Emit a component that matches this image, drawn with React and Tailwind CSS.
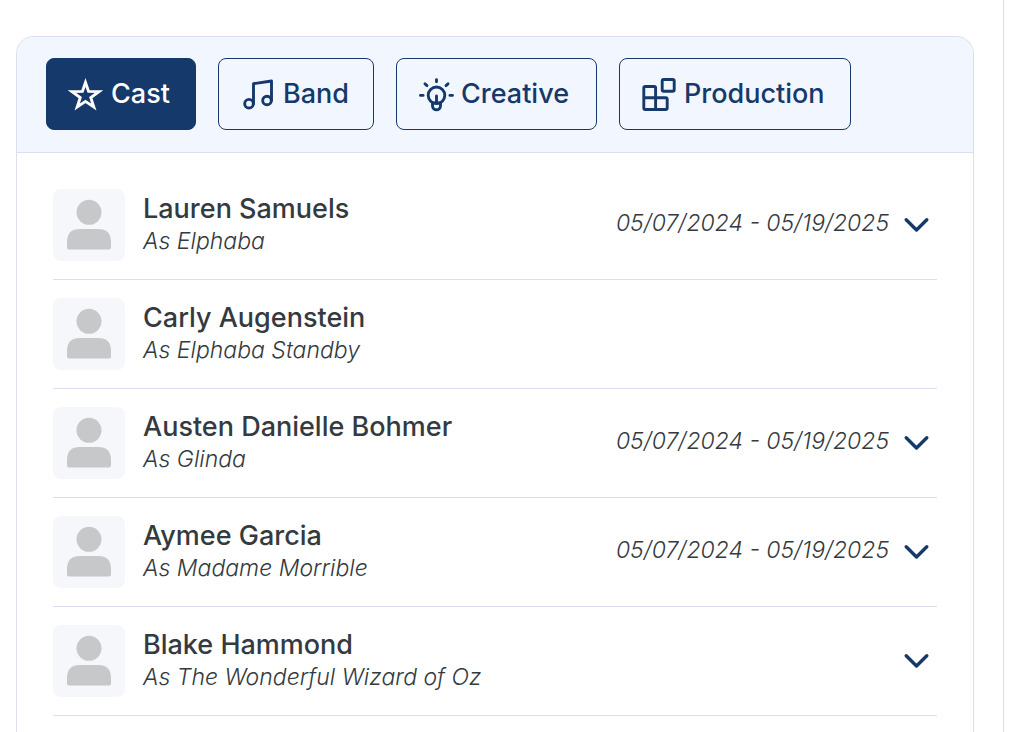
import { useState } from "react";

const people = [
    { name: "Lauren Samuels", role: "As Elphaba", dates: "05/07/2024 - 05/19/2025", expandable: true },
    { name: "Carly Augenstein", role: "As Elphaba Standby" },
    { name: "Austen Danielle Bohmer", role: "As Glinda", dates: "05/07/2024 - 05/19/2025", expandable: true },
    { name: "Aymee Garcia", role: "As Madame Morrible", dates: "05/07/2024 - 05/19/2025", expandable: true },
    { name: "Blake Hammond", role: "As The Wonderful Wizard of Oz", expandable: true },
];

function TabIcon({ children, sharp }) {
    return (
        <svg
            viewBox="0 0 36 36"
            className="size-9 shrink-0"
            fill="none"
            stroke="currentColor"
            strokeWidth="2.9"
            strokeLinecap="round"
            strokeLinejoin={sharp ? "miter" : "round"}
            strokeMiterlimit="8"
            aria-hidden="true"
        >
            {children}
        </svg>
    );
}

const tabs = [
    {
        label: "Cast",
        width: "min-w-[150px]",
        icon: (
            <TabIcon sharp>
                <path d="M17.5 6.5 20.6 15.4 31 15.6 22.8 21.6 25.8 31 17.5 25.4 9.2 31 12.2 21.6 4 15.6 14.4 15.4Z" />
            </TabIcon>
        ),
    },
    {
        label: "Band",
        width: "min-w-[156px]",
        icon: (
            <TabIcon>
                <circle cx="9" cy="27.7" r="4.3" />
                <circle cx="27" cy="24.5" r="4.3" />
                <path d="M13.5 27.7V7.7L31.5 5V24.5" />
            </TabIcon>
        ),
    },
    {
        label: "Creative",
        width: "min-w-[201px]",
        icon: (
            <TabIcon>
                <circle cx="18.5" cy="19.3" r="8.3" />
                <path d="M18.5 20V26M14.5 27V29.8a4 4 0 0 0 8 0V27Z" />
                <path d="M18.5 3.6V5.8M7 7.8 9 9.6M30 7.8 28 9.6M2.5 19.4H5.1M31.9 19.4H34.5" />
            </TabIcon>
        ),
    },
    {
        label: "Production",
        width: "min-w-[232px]",
        icon: (
            <TabIcon>
                <rect x="21.2" y="3.5" width="12" height="11.8" rx="1.5" />
                <path d="M14.6 21.7V12q0-1.5-1.5-1.5H4.3q-1.5 0-1.5 1.5V32q0 1.5 1.5 1.5H24.7q1.5 0 1.5-1.5V23.2q0-1.5-1.5-1.5H2.8M14.6 21.7V33.5" />
            </TabIcon>
        ),
    },
];

function Avatar() {
    return (
        <div className="size-18 shrink-0 rounded-lg bg-[#f5f7fb]">
            <svg viewBox="0 0 72 72" className="size-18" fill="#c7c8ca" aria-hidden="true">
                <circle cx="36" cy="23.3" r="12.5" />
                <path d="M14 58.5V53q0-13 13-13H45q13 0 13 13V58.5q0 2-2 2H16q-2 0-2-2Z" />
            </svg>
        </div>
    );
}

function PersonRow({ person }) {
    return (
        <li className="flex items-center border-b border-[#dcdfeb] py-[18px]">
            <Avatar />
            <div className="ml-[18px] flex-1">
                <p className="text-[27px] leading-8 font-medium">{person.name}</p>
                <p className="text-[23px] leading-8 font-light italic">{person.role}</p>
            </div>
            {person.dates && (
                <span className="pb-1 text-[23px] leading-8 font-light italic">{person.dates}</span>
            )}
            {person.expandable && (
                <button
                    type="button"
                    aria-label={`Show dates for ${person.name}`}
                    className="ml-2 p-1 text-[#16396b]"
                >
                    <svg viewBox="0 0 32 32" className="size-8" fill="none" stroke="currentColor" strokeWidth="3.4" strokeLinecap="round" strokeLinejoin="round">
                        <path d="M5.2 10.7 15.5 21 25.8 10.7" />
                    </svg>
                </button>
            )}
        </li>
    );
}

export default function App() {
    const [active, setActive] = useState("Cast");

    return (
        <div className="h-screen overflow-hidden bg-white font-['Inter',sans-serif] text-[#343a40]">
            <main className="mr-4 flex h-full flex-col border-r border-[#dcdfeb] pt-9 pr-[29px] pl-4">
                <section className="flex-1 overflow-hidden rounded-t-[18px] border border-b-0 border-[#dadfef]">
                    <div className="flex gap-[22px] border-b border-[#dadfef] bg-[#f2f7ff] px-[29px] pt-[21px] pb-[22px]">
                        {tabs.map((tab) => (
                            <button
                                key={tab.label}
                                type="button"
                                onClick={() => setActive(tab.label)}
                                className={`flex h-18 items-center gap-[7px] rounded-lg border border-[#16396b] px-[21px] text-[27px] leading-9 font-medium ${tab.width} ${
                                    active === tab.label ? "bg-[#16396b] text-white" : "text-[#16396b]"
                                }`}
                            >
                                {tab.icon}
                                {tab.label}
                            </button>
                        ))}
                    </div>

                    <ul className="px-9 pt-[18px]">
                        {people.map((person) => (
                            <PersonRow key={person.name} person={person} />
                        ))}
                    </ul>
                </section>
            </main>
        </div>
    );
}
